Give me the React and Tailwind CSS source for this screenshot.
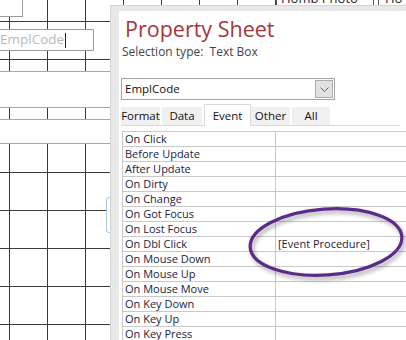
import React from 'react'

const FONT = { fontFamily: '"Open Sans", "Noto Sans", Arial, sans-serif' }

const events = [
  'On Click',
  'Before Update',
  'After Update',
  'On Dirty',
  'On Change',
  'On Got Focus',
  'On Lost Focus',
  'On Dbl Click',
  'On Mouse Down',
  'On Mouse Up',
  'On Mouse Move',
  'On Key Down',
  'On Key Up',
  'On Key Press',
]

const values = { 'On Dbl Click': '[Event Procedure]' }

const tabs = [
  { name: 'Format', width: 'w-[41px]' },
  { name: 'Data', width: 'w-[42px]' },
  { name: 'Event', width: 'w-[47px]' },
  { name: 'Other', width: 'w-[41px]' },
  { name: 'All', width: 'w-[40px]' },
]

const DesignSurface = () => (
  <div className="relative w-full">
    <div className="relative h-[71px] w-full overflow-hidden [background-image:linear-gradient(to_right,#3a3a3a_1px,transparent_1px),linear-gradient(to_bottom,#3a3a3a_1px,transparent_1px)] [background-size:38px_38px] [background-position:9px_21px]">
      {/* controls on the form canvas */}
      <div className="absolute left-[-10px] top-[-10px] w-[33px] h-[27px] bg-white border border-[#9c9c9c]" />
      <div className="absolute left-[-10px] top-[29px] w-[104px] h-[22px] bg-white border border-[#9c9c9c] flex items-center">
        <span className="ml-[9px] text-[13.5px] leading-none text-[#b8b8b8]">EmplCode</span>
        <span className="ml-[1px] w-px h-[15px] bg-[#222]" />
      </div>
      <div className="absolute left-[276px] top-[-9px] w-[98px] h-[14px] bg-white border-l border-r border-[#555] flex items-end">
        <span className="ml-[4px] text-[13px] leading-none text-[#222]">Homb Photo</span>
      </div>
      <div className="absolute left-[378px] top-[-9px] w-[40px] h-[14px] bg-white border-l border-[#555] flex items-end">
        <span className="ml-[6px] text-[13px] leading-none text-[#222]">Ho</span>
      </div>
    </div>
    <div className="h-[37px] w-full bg-white border-y border-[#a8a8a8]" />
    <div className="h-[11px] w-full [background-image:linear-gradient(to_right,#3a3a3a_1px,transparent_1px)] [background-size:38px_38px] [background-position:9px_0px]" />
    <div className="h-[25px] w-full bg-white border-y border-[#a8a8a8]" />
    <div className="h-[196px] w-full [background-image:linear-gradient(to_right,#3a3a3a_1px,transparent_1px),linear-gradient(to_bottom,#3a3a3a_1px,transparent_1px)] [background-size:38px_38px] [background-position:9px_28px]" />
    <div className="absolute left-[106px] top-[197px] w-[8px] h-[36px] bg-white border border-[#a9c6e4] rounded-[3px]" />
  </div>
)

const PropertySheet = () => (
  <div className="absolute left-[110px] top-[5px] right-0 bottom-0 bg-[#e8e8e8] border-l border-t border-[#d4d4d4] pl-[8px] pt-[5px] overflow-hidden">
    <div className="h-full bg-white pl-[2px] pt-[4px]">
      <h1 className="ml-[4px] h-[28px] text-[21.5px] leading-[28px] font-normal text-[#a4373a]">
        Property Sheet
      </h1>
      <p className="ml-[1px] mt-[1px] h-[16px] text-[12px] leading-[16px] text-[#444]">
        Selection type:&nbsp;&nbsp;Text Box
      </p>

      <div className="mt-[18px] w-[214px] h-[22px] border border-[#a3a3a3] flex items-center">
        <span className="ml-[3px] flex-1 text-[11.5px] text-[#111]">EmplCode</span>
        <div className="mr-[1px] w-[18px] h-[18px] bg-[#e1e1e1] border border-[#adadad] flex items-center justify-center">
          <svg width="9" height="5" viewBox="0 0 9 5">
            <path d="M0.5 0.5 L4.5 4.5 L8.5 0.5" fill="none" stroke="#666" strokeWidth="1" />
          </svg>
        </div>
      </div>

      <div className="mt-[4px] mr-[6px] flex items-end border-b border-[#dadada]">
        {tabs.map((tab) => (
          tab.name === 'Event' ? (
            <div
              key={tab.name}
              className={`${tab.width} h-[22px] -mb-px bg-white border-x border-t border-[#d9d9d9] flex items-center justify-center text-[11.5px] text-[#111]`}
            >
              {tab.name}
            </div>
          ) : (
            <div
              key={tab.name}
              className={`${tab.width} h-[18px] bg-[#f0f0f0] border-r-2 border-white flex items-center justify-center text-[11.5px] text-[#111]`}
            >
              {tab.name}
            </div>
          )
        ))}
      </div>

      <div className="mt-[5px] ml-[1px] border-t border-l border-[#c9c9c9]">
        {events.map((name) => (
          <div key={name} className="flex h-[15px] border-b border-[#c9c9c9]">
            <div className="w-[153px] shrink-0 border-r border-[#c9c9c9] pl-[2px] text-[11px] leading-[14px] text-[#1c1c3c] whitespace-nowrap">
              {name}
            </div>
            <div className="flex-1 pl-[2px] text-[11px] leading-[14px] text-[#1c1c3c] whitespace-nowrap">
              {values[name] || ''}
            </div>
          </div>
        ))}
      </div>
    </div>
  </div>
)

const App = () => (
  <div className="relative w-[406px] h-[340px] overflow-hidden bg-white" style={FONT}>
    <DesignSurface />
    <PropertySheet />
    <svg
      className="absolute left-[246px] top-[205px] drop-shadow-[2px_3px_2px_rgba(0,0,0,0.35)]"
      width="160"
      height="74"
      viewBox="0 0 160 74"
    >
      <ellipse
        cx="80"
        cy="37"
        rx="76"
        ry="33"
        transform="rotate(-4 80 37)"
        fill="none"
        stroke="#5d2a8b"
        strokeWidth="3.2"
      />
    </svg>
  </div>
)

export default App
